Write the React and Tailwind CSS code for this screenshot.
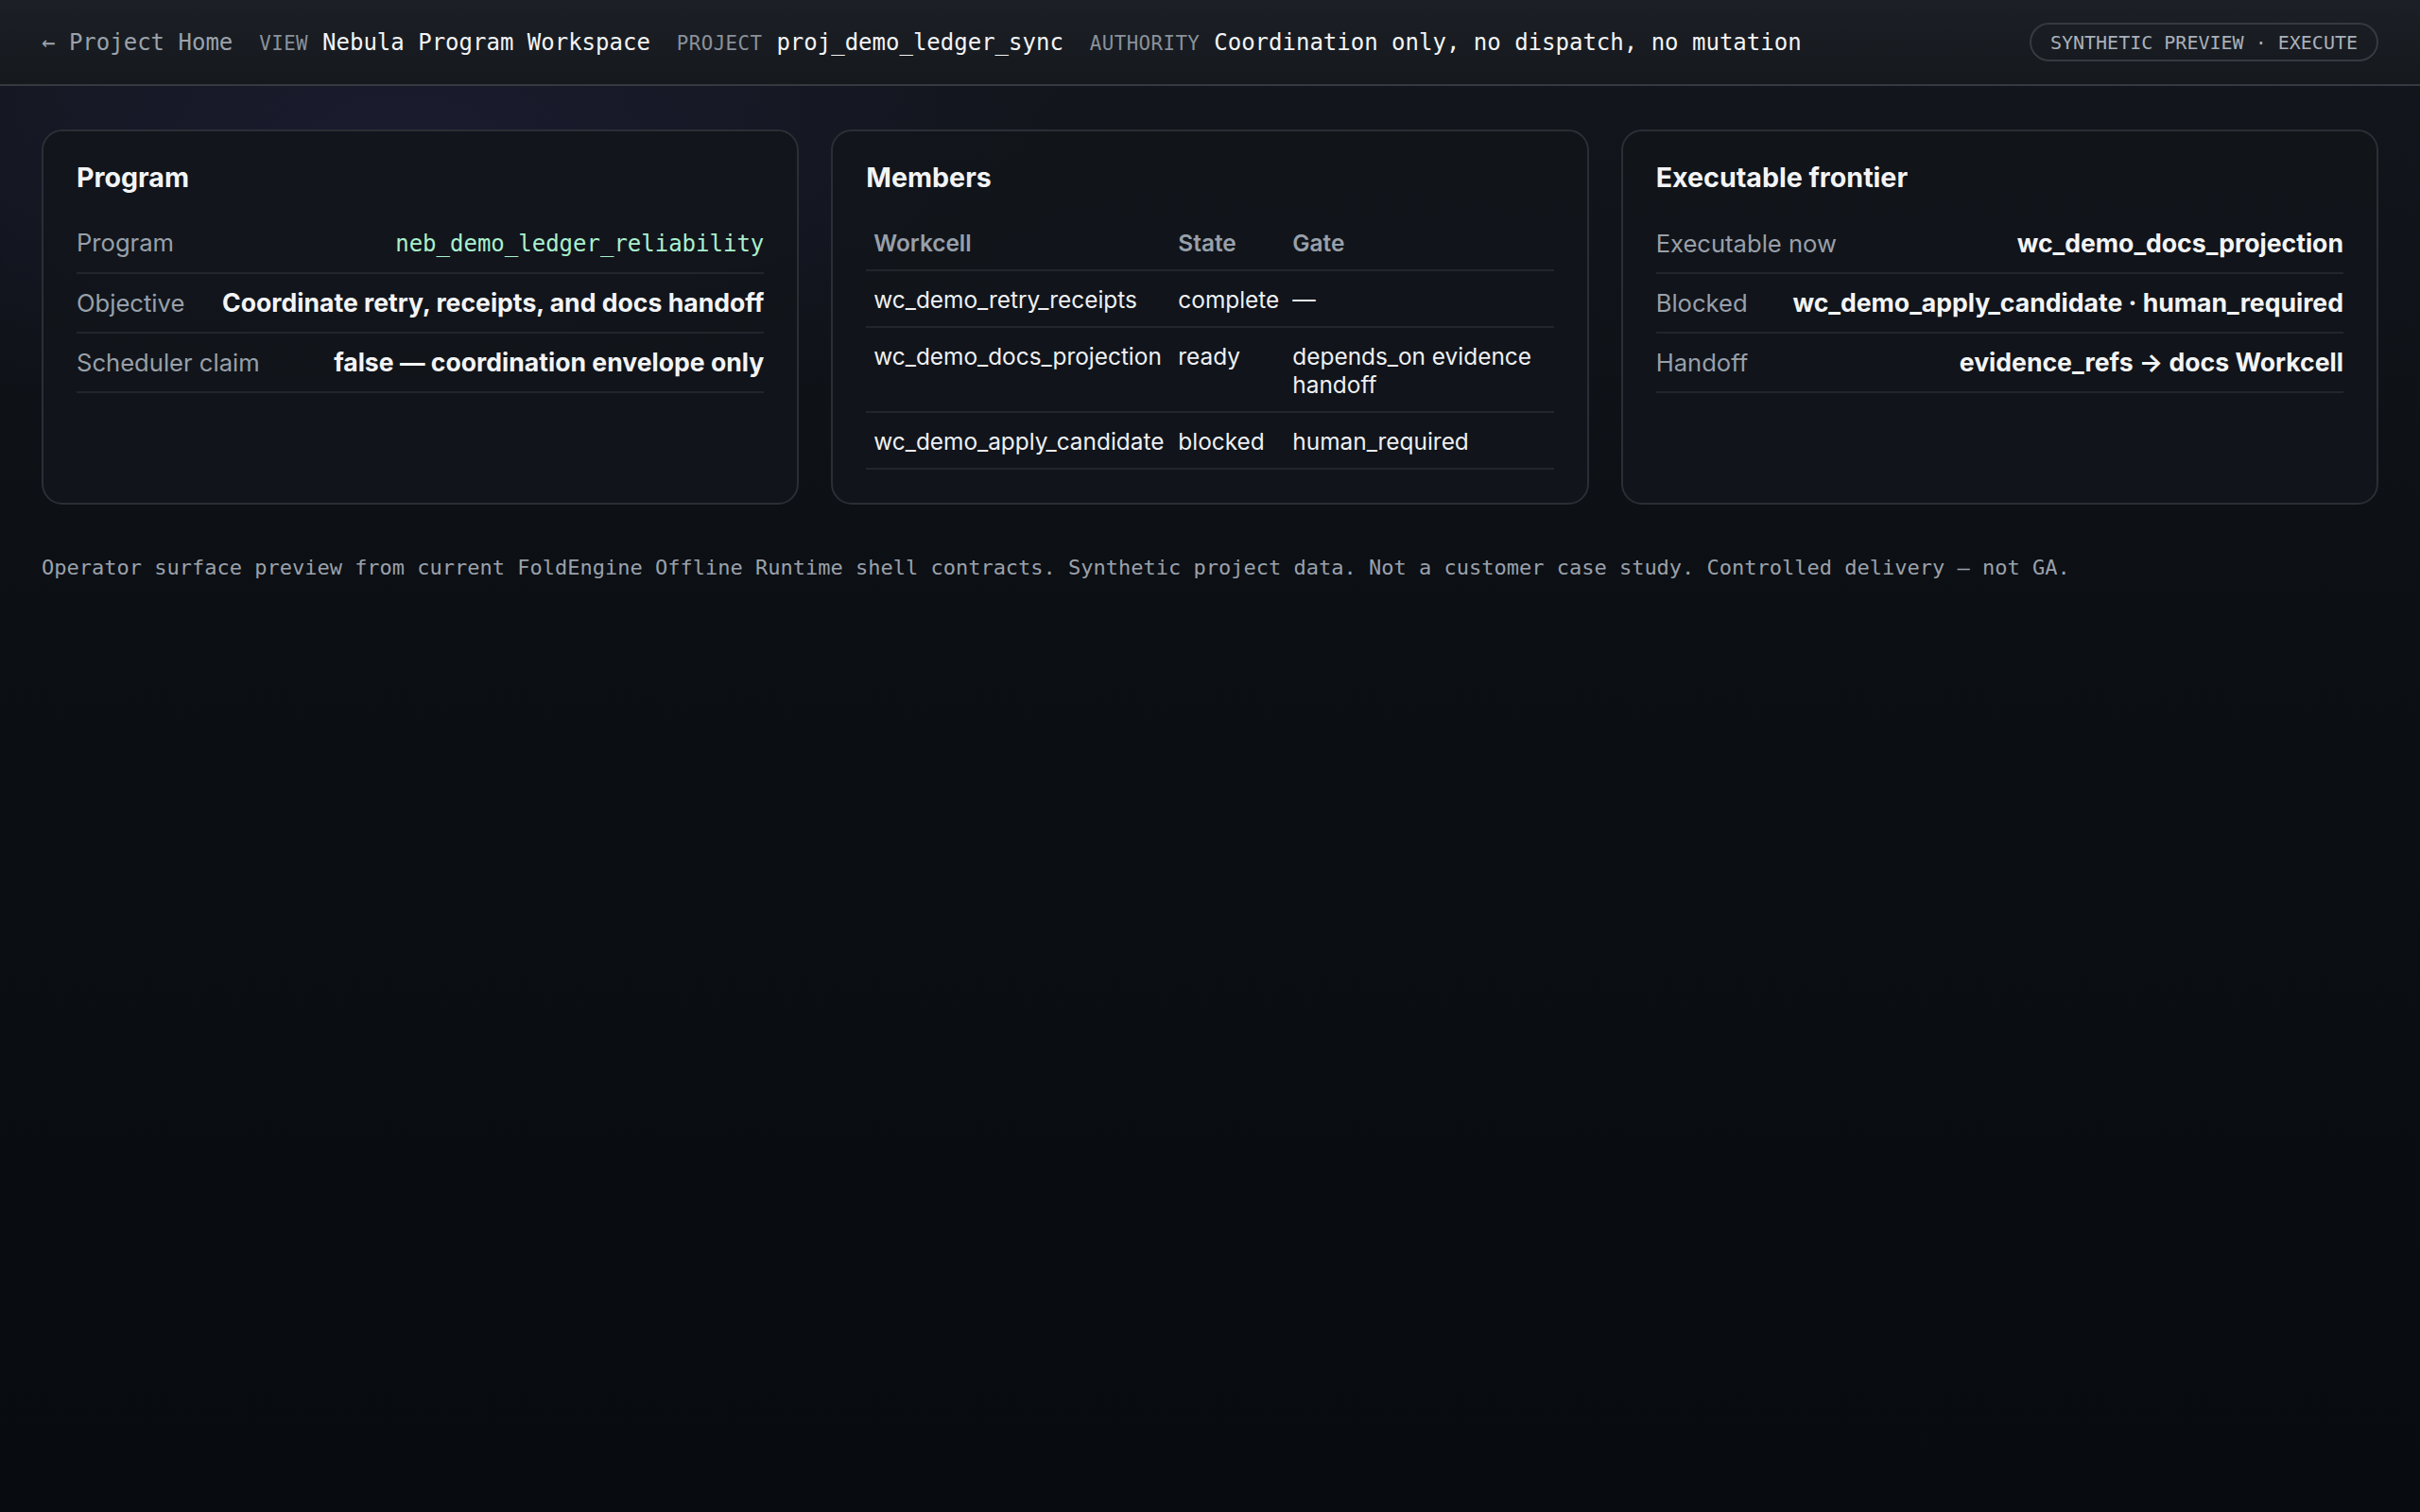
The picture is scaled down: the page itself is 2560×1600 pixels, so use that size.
import React from "react";

const mono = "font-['DejaVu_Sans_Mono','Liberation_Mono',monospace]";
const sans = "font-['Inter','Noto_Sans',sans-serif]";

const headerItems = [
  { label: "VIEW", value: "Nebula Program Workspace" },
  { label: "PROJECT", value: "proj_demo_ledger_sync" },
  { label: "AUTHORITY", value: "Coordination only, no dispatch, no mutation" },
];

const programRows = [
  { label: "Program", value: "neb_demo_ledger_reliability", code: true },
  { label: "Objective", value: "Coordinate retry, receipts, and docs handoff" },
  { label: "Scheduler claim", value: "false — coordination envelope only" },
];

const frontierRows = [
  { label: "Executable now", value: "wc_demo_docs_projection" },
  { label: "Blocked", value: "wc_demo_apply_candidate · human_required" },
  { label: "Handoff", value: "evidence_refs → docs Workcell" },
];

const members = [
  { workcell: "wc_demo_retry_receipts", state: "complete", gate: "—" },
  { workcell: "wc_demo_docs_projection", state: "ready", gate: "depends_on evidence handoff" },
  { workcell: "wc_demo_apply_candidate", state: "blocked", gate: "human_required" },
];

function Card({ title, children }) {
  return (
    <section className="rounded-[22px] border-2 border-[#2b2f35] bg-[#12151b]/90 p-[35px]">
      <h2 className="mb-[25px] text-[28.6px] leading-[28px] font-bold text-[#f3f4f6]">{title}</h2>
      {children}
    </section>
  );
}

function KeyValues({ rows }) {
  return (
    <div>
      {rows.map((row) => (
        <div
          key={row.label}
          className="flex items-baseline justify-between gap-[24px] border-b-2 border-[#22262c] py-[15px] leading-[30px]"
        >
          <span className="shrink-0 text-[25.6px] text-[#98a0aa]">{row.label}</span>
          {row.code ? (
            <span className={`${mono} text-[24px] text-[#a9f0cf]`}>{row.value}</span>
          ) : (
            <span className="text-right text-[26.6px] font-bold text-[#f3f4f6]">{row.value}</span>
          )}
        </div>
      ))}
    </div>
  );
}

export default function App() {
  return (
    <div
      className={`${sans} min-h-screen bg-[radial-gradient(ellipse_1000px_420px_at_430px_150px,rgba(58,52,120,0.22),transparent_75%),linear-gradient(180deg,#13161c_0%,#0c0f14_40%,#080b0f_100%)] text-[#f3f4f6]`}
    >
      {/* Top bar */}
      <header className="flex h-[91px] items-center justify-between border-b-2 border-[#363a40] bg-[linear-gradient(180deg,#1c2026,#15181d)] px-[44px]">
        <div className={`${mono} flex items-baseline gap-[28px]`}>
          <span className="text-[24px] text-[#9aa2ac]">← Project Home</span>
          {headerItems.map((item) => (
            <span key={item.label} className="flex items-baseline gap-[15px]">
              <span className="text-[20.8px] tracking-[0.02em] text-[#8a919b]">{item.label}</span>
              <span className="text-[24px] text-[#f3f4f6]">{item.value}</span>
            </span>
          ))}
        </div>
        <span
          className={`${mono} flex h-[41px] items-center rounded-full border-2 border-[#353a41] px-[20px] text-[20px] text-[#a9b1bb]`}
        >
          SYNTHETIC PREVIEW · EXECUTE
        </span>
      </header>

      <main className="px-[44px] pt-[46px]">
        <div className="grid grid-cols-3 gap-[34px]">
          <Card title="Program">
            <KeyValues rows={programRows} />
          </Card>

          <Card title="Members">
            <table className="w-full table-fixed border-collapse text-[24.4px] leading-[30px]">
              <thead>
                <tr className="border-b-2 border-[#22262c]">
                  <th className="w-[322px] px-[8px] pt-[15px] pb-[13px] text-left font-semibold text-[#98a0aa]">Workcell</th>
                  <th className="w-[121px] px-[8px] pt-[15px] pb-[13px] text-left font-semibold text-[#98a0aa]">State</th>
                  <th className="px-[8px] pt-[15px] pb-[13px] text-left font-semibold text-[#98a0aa]">Gate</th>
                </tr>
              </thead>
              <tbody>
                {members.map((m) => (
                  <tr key={m.workcell} className="border-b-2 border-[#22262c] align-top text-[#eef0f3]">
                    <td className="px-[8px] pt-[15px] pb-[13px] whitespace-nowrap">{m.workcell}</td>
                    <td className="px-[8px] pt-[15px] pb-[13px]">{m.state}</td>
                    <td className="px-[8px] pt-[15px] pb-[13px]">{m.gate}</td>
                  </tr>
                ))}
              </tbody>
            </table>
          </Card>

          <Card title="Executable frontier">
            <KeyValues rows={frontierRows} />
          </Card>
        </div>

        <p className={`${mono} mt-[52px] text-[22px] leading-[30px] text-[#9aa1ab]`}>
          Operator surface preview from current FoldEngine Offline Runtime shell contracts. Synthetic project data. Not a
          customer case study. Controlled delivery — not GA.
        </p>
      </main>
    </div>
  );
}
